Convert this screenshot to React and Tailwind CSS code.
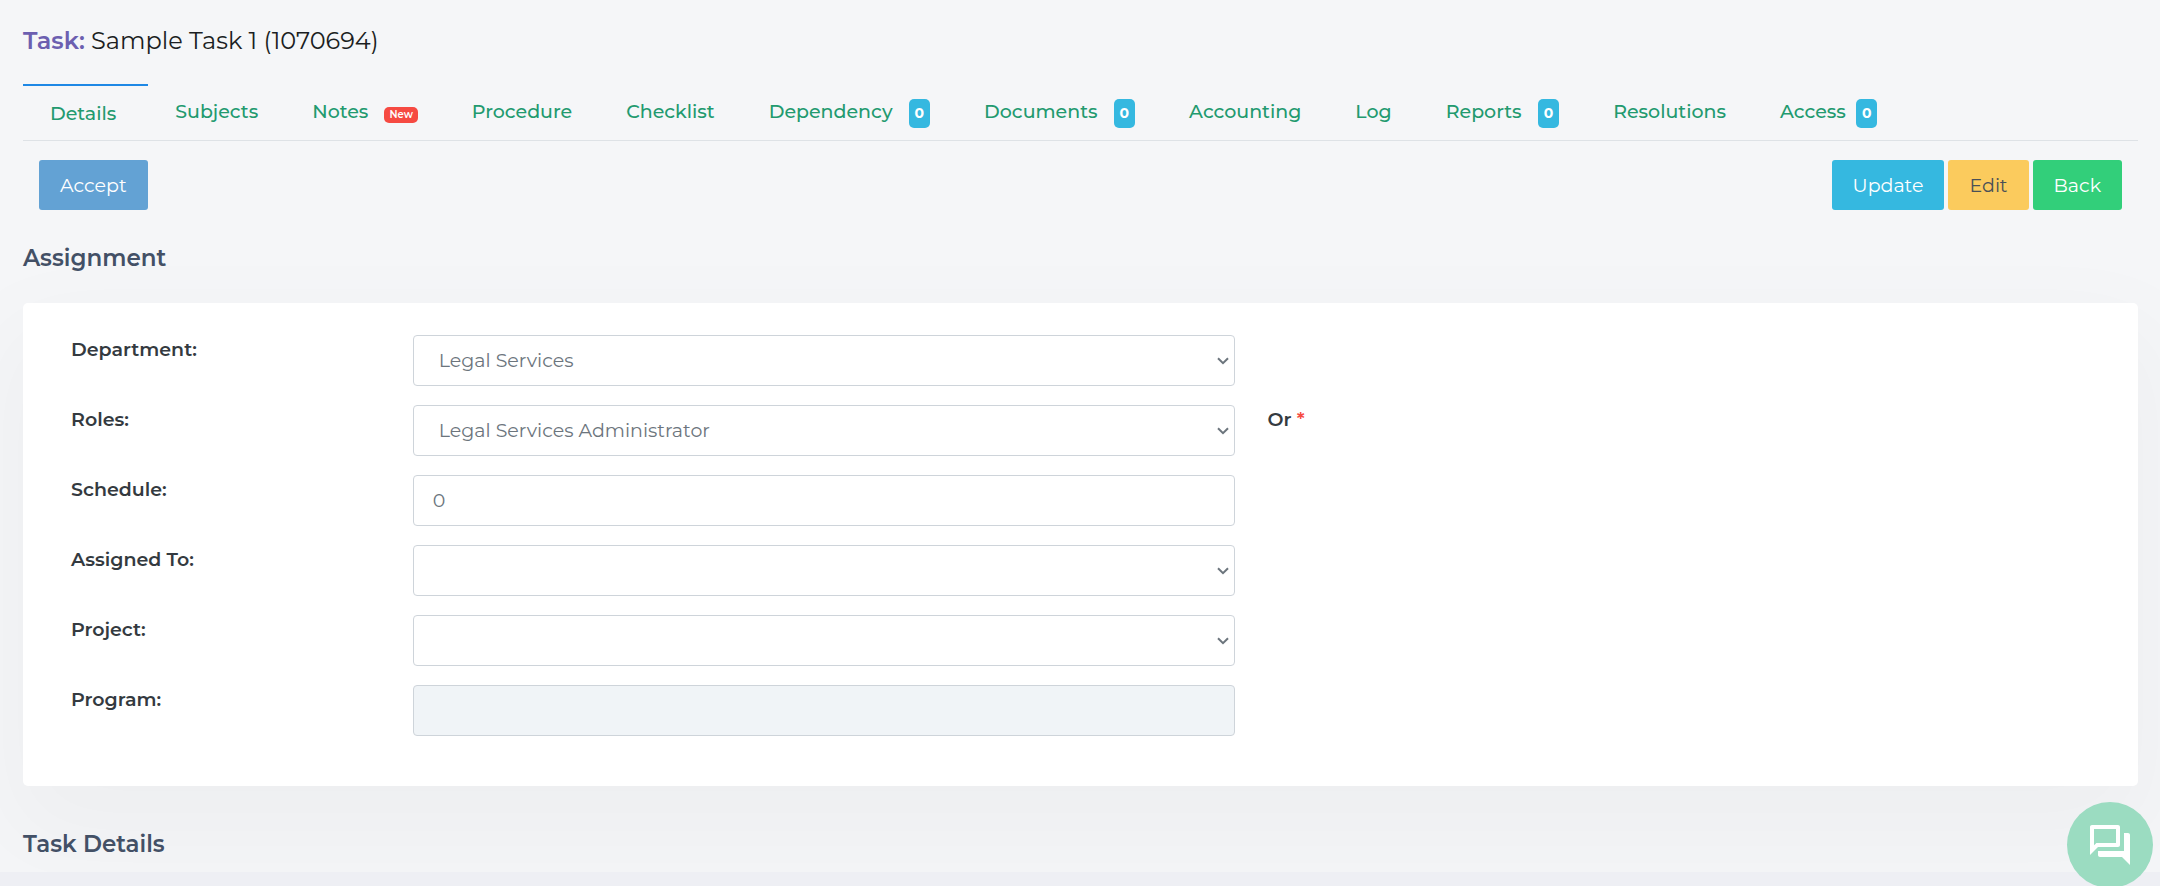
import React from 'react';
import { MdOutlineQuestionAnswer } from 'react-icons/md';

const tabs = [
    { label: 'Details', active: true },
    { label: 'Subjects' },
    { label: 'Notes', isNew: true },
    { label: 'Procedure' },
    { label: 'Checklist' },
    { label: 'Dependency', count: 0 },
    { label: 'Documents', count: 0 },
    { label: 'Accounting' },
    { label: 'Log' },
    { label: 'Reports', count: 0 },
    { label: 'Resolutions' },
    { label: 'Access', count: 0, tight: true },
];

const fields = [
    { id: 'department', label: 'Department:', type: 'select', value: 'Legal Services' },
    { id: 'roles', label: 'Roles:', type: 'select', value: 'Legal Services Administrator', note: 'Or' },
    { id: 'schedule', label: 'Schedule:', type: 'text', value: '0' },
    { id: 'assigned-to', label: 'Assigned To:', type: 'select', value: '' },
    { id: 'project', label: 'Project:', type: 'select', value: '' },
    { id: 'program', label: 'Program:', type: 'text', value: '', disabled: true },
];

const Tab = ({ label, active, isNew, count, tight }) => (
    <a
        href="#"
        className={`flex items-start pt-[13px] pb-[11px] text-[19px] leading-[30px] font-medium text-[#229a6f] ${tight ? 'gap-[10px]' : 'gap-4'} ${active ? 'border-t-2 border-[#1e88e5] pr-8 pl-[27px]' : 'px-[27px]'}`}
    >
        {label}
        {isNew && (
            <span className="mt-[10px] rounded-[5px] bg-[#f64a42] px-[5px] text-[10px] leading-4 font-semibold text-white">New</span>
        )}
        {count !== undefined && (
            <span className="mt-[2px] rounded-[5px] bg-[#35b8e0] px-[6px] text-[14px] leading-[29px] font-bold text-white">{count}</span>
        )}
    </a>
);

const FormRow = ({ id, label, type, value, note, disabled }) => (
    <div className="grid grid-cols-12">
        <label htmlFor={id} className="col-span-2 px-4 text-[19px] leading-[30px] font-semibold text-[#343a40]">
            {label}
        </label>
        <div className="relative col-span-5 px-4">
            {type === 'select' ? (
                <>
                    <select
                        id={id}
                        defaultValue={value}
                        className="block h-[51px] w-full appearance-none rounded-[4px] border border-[#ced4da] bg-white px-[25px] pt-[2px] text-[19px] text-[#6c757d]"
                    >
                        <option value={value}>{value}</option>
                    </select>
                    <svg
                        viewBox="0 0 12 8"
                        className="pointer-events-none absolute top-[22px] right-[22px] h-2 w-3 text-[#6c757d]"
                        fill="none"
                        stroke="currentColor"
                        strokeWidth="2"
                    >
                        <path d="M1 1.2L6 6.2L11 1.2" />
                    </svg>
                </>
            ) : (
                <input
                    id={id}
                    type="text"
                    defaultValue={value}
                    disabled={disabled}
                    className="block h-[51px] w-full rounded-[4px] border border-[#ced4da] bg-white px-[19px] text-[19px] text-[#6c757d] disabled:bg-[#f0f4f7]"
                />
            )}
        </div>
        {note && (
            <div className="col-span-5 px-4 text-[19px] leading-[30px] font-semibold text-[#343a40]">
                {note} <span className="text-[#f64a42]">*</span>
            </div>
        )}
    </div>
);

const App = () => {
    return (
        <div className="flex min-h-screen flex-col bg-[#eeeff4] font-['Montserrat','Inter',sans-serif]">
            <main className="overflow-hidden bg-[#f5f6f8] pr-[22px] pb-3 pl-[23px]">
                <h1 className="pt-[22px] pb-6 text-[24px] leading-[38px] text-[#1b1e22]">
                    <span className="font-semibold text-[#6c5fb0]">Task:</span> Sample Task 1 (1070694)
                </h1>

                <nav className="flex items-start border-b border-[#dee2e6]">
                    {tabs.map((tab) => (
                        <Tab key={tab.label} {...tab} />
                    ))}
                </nav>

                <div className="flex justify-between px-4 pt-[19px]">
                    <button className="h-[50px] rounded-[3px] bg-[#63a2d4] px-[21px] pt-[2px] text-[19px] text-white">Accept</button>
                    <div className="flex gap-1">
                        <button className="h-[50px] rounded-[3px] bg-[#35b8e0] px-[21px] pt-[2px] text-[19px] text-white">Update</button>
                        <button className="h-[50px] rounded-[3px] bg-[#fbcb5d] px-[21px] pt-[2px] text-[19px] text-[#495057]">Edit</button>
                        <button className="h-[50px] rounded-[3px] bg-[#32cf7a] px-[21px] pt-[2px] text-[19px] text-white">Back</button>
                    </div>
                </div>

                <h2 className="pt-[33px] pb-[29px] text-[23px] leading-[31px] font-semibold text-[#435066]">Assignment</h2>

                <section className="flex flex-col gap-[19px] rounded-[5px] bg-white px-8 pt-8 pb-[50px] shadow-[0_40px_100px_20px_rgba(0,0,0,0.03)]">
                    {fields.map((field) => (
                        <FormRow key={field.id} {...field} />
                    ))}
                </section>

                <h2 className="relative pt-[43px] text-[23px] leading-[31px] font-semibold text-[#435066]">Task Details</h2>
            </main>

            {/* Chat launcher */}
            <button
                aria-label="Open chat"
                className="fixed right-[7px] -bottom-[2px] flex size-[86px] items-center justify-center rounded-full bg-[#9bdcc1] text-white"
            >
                <MdOutlineQuestionAnswer size={48} />
            </button>
        </div>
    );
};

export default App;
